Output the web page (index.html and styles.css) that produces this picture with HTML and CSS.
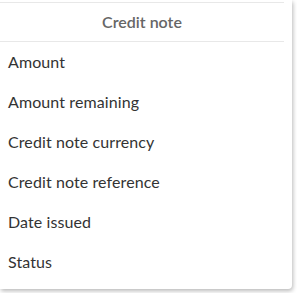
FILE: index.html
```html
<!DOCTYPE html>
<html lang="en">
  <head>
    <meta charset="UTF-8" />
    <title>Credit note fields</title>
    <link rel="stylesheet" href="styles.css">
  </head>
  <body>
    <div class="field-panel">
      <div class="field-group">
        <div class="group-title">Credit note</div>
        <ul class="field-list">
          <li class="field-item">Amount</li>
          <li class="field-item">Amount remaining</li>
          <li class="field-item">Credit note currency</li>
          <li class="field-item">Credit note reference</li>
          <li class="field-item">Date issued</li>
          <li class="field-item">Status</li>
        </ul>
      </div>
    </div>
  </body>
</html>
```

FILE: styles.css
```css
* {
  margin: 0;
  padding: 0;
  box-sizing: border-box;
}

body {
  font-family: Lato, "Open Sans", sans-serif;
  background: #ffffff;
  width: 297px;
  height: 293px;
  overflow: hidden;
}

.field-panel {
  width: 292px;
  height: 289px;
  background: white;
  border-bottom-right-radius: 4px;
  box-shadow: 1px 2px 4px rgba(0, 0, 0, 0.28);
  padding: 2px 8px 0 0;
}

.field-group {
  width: 284px;
}

.group-title {
  height: 40px;
  border-top: 1px solid #e8e8e8;
  border-bottom: 1px solid #e8e8e8;
  display: flex;
  align-items: center;
  justify-content: center;
  padding-bottom: 1px;
  font-size: 16px;
  font-weight: 600;
  color: #666666;
}

.field-list {
  list-style: none;
}

.field-item {
  height: 40px;
  display: flex;
  align-items: center;
  padding-left: 8px;
  padding-bottom: 2px;
  font-size: 16px;
  letter-spacing: 0.1px;
  color: #333333;
}
```
